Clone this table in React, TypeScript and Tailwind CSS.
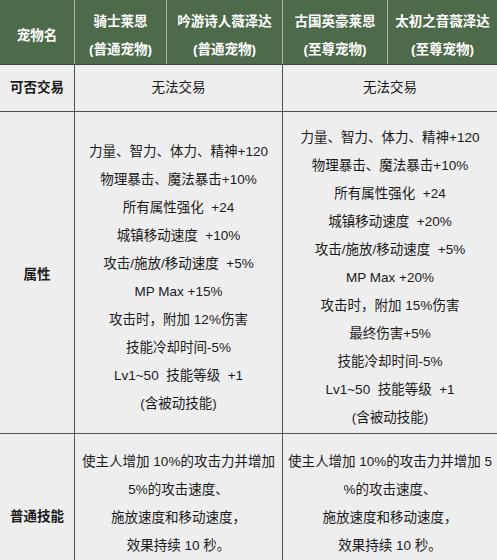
import React from "react";

const font = { fontFamily: '"Liberation Sans", "Noto Sans CJK SC", sans-serif' };

const leftAttrs = [
  "力量、智力、体力、精神+120",
  "物理暴击、魔法暴击+10%",
  "所有属性强化  +24",
  "城镇移动速度  +10%",
  "攻击/施放/移动速度  +5%",
  "MP Max +15%",
  "攻击时，附加 12%伤害",
  "技能冷却时间-5%",
  "Lv1~50  技能等级  +1",
  "(含被动技能)",
];

const rightAttrs = [
  "力量、智力、体力、精神+120",
  "物理暴击、魔法暴击+10%",
  "所有属性强化  +24",
  "城镇移动速度  +20%",
  "攻击/施放/移动速度  +5%",
  "MP Max +20%",
  "攻击时，附加 15%伤害",
  "最终伤害+5%",
  "技能冷却时间-5%",
  "Lv1~50  技能等级  +1",
  "(含被动技能)",
];

const leftSkill = ["使主人增加 10%的攻击力并增加", "5%的攻击速度、", "施放速度和移动速度，", "效果持续 10 秒。"];
const rightSkill = ["使主人增加 10%的攻击力并增加 5", "%的攻击速度、", "施放速度和移动速度，", "效果持续 10 秒。"];

function Lines({ items }: { items: string[] }) {
  return (
    <>
      {items.map((t, i) => (
        <div key={i} className="h-[28px] leading-[28px] whitespace-pre text-center">
          {t}
        </div>
      ))}
    </>
  );
}

export default function App() {
  return (
    <div className="w-[497px] h-[560px] overflow-hidden bg-[#eeeeee] text-[13.5px] text-[#1a1a1a]" style={font}>
      {/* header */}
      <div className="flex h-[65px] bg-[#4d6b4b] border-b border-[#3c4a3c] text-white font-bold">
        <div className="w-[75px] border-r border-[#a7b6a5] flex items-center justify-center pt-[8px]">宠物名</div>
        {[
          ["骑士莱恩", "(普通宠物)", "w-[92px]"],
          ["吟游诗人薇泽达", "(普通宠物)", "w-[116px]"],
          ["古国英豪莱恩", "(至尊宠物)", "w-[105px]"],
        ].map(([a, b, w], i) => (
          <div key={i} className={`${w} border-r border-[#a7b6a5] flex flex-col items-center justify-center pt-[8px]`}>
            <div className="h-[28px] leading-[28px]">{a}</div>
            <div className="h-[28px] leading-[28px]">{b}</div>
          </div>
        ))}
        <div className="flex-1 flex flex-col items-center justify-center pt-[8px]">
          <div className="h-[28px] leading-[28px]">太初之音薇泽达</div>
          <div className="h-[28px] leading-[28px]">(至尊宠物)</div>
        </div>
      </div>

      {/* trade row */}
      <div className="flex h-[47px] border-b border-[#4a554a]">
        <div className="w-[75px] border-r border-[#4a554a] flex items-center justify-center font-bold">可否交易</div>
        <div className="w-[208px] border-r border-[#4a554a] flex items-center justify-center">无法交易</div>
        <div className="flex-1 flex items-center justify-center">无法交易</div>
      </div>

      {/* attributes row */}
      <div className="flex h-[322px] border-b border-[#4a554a]">
        <div className="w-[75px] border-r border-[#4a554a] flex items-center justify-center font-bold pt-[6px]">属性</div>
        <div className="w-[208px] border-r border-[#4a554a] flex flex-col justify-center pt-[10px]">
          <Lines items={leftAttrs} />
        </div>
        <div className="flex-1 flex flex-col justify-center pt-[10px]">
          <Lines items={rightAttrs} />
        </div>
      </div>

      {/* skill row */}
      <div className="flex h-[166px]">
        <div className="w-[75px] border-r border-[#4a554a] flex items-center justify-center font-bold">普通技能</div>
        <div className="w-[208px] border-r border-[#4a554a] flex flex-col pt-[14px]">
          <Lines items={leftSkill} />
        </div>
        <div className="flex-1 flex flex-col pt-[14px]">
          <Lines items={rightSkill} />
        </div>
      </div>
    </div>
  );
}
